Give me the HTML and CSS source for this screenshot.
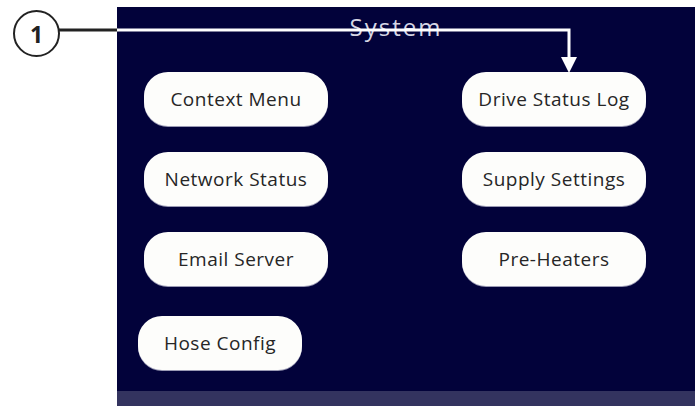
FILE: index.html
```html
<!DOCTYPE html>
<html lang="en">
<head>
  <meta charset="UTF-8" />
  <meta name="viewport" content="width=device-width, initial-scale=1.0"/>
  <title>System</title>
  <link rel="stylesheet" href="styles.css">
</head>
<body>
  <div class="page">
    <div class="screen">
      <h1 class="screen-title">System</h1>
      <div class="menu-grid">
        <button class="menu-btn">Context Menu</button>
        <button class="menu-btn">Drive Status Log</button>
        <button class="menu-btn">Network Status</button>
        <button class="menu-btn">Supply Settings</button>
        <button class="menu-btn">Email Server</button>
        <button class="menu-btn">Pre-Heaters</button>
        <button class="menu-btn menu-btn-short">Hose Config</button>
      </div>
      <div class="screen-footer"></div>
    </div>

    <!-- callout 1 pointing at Drive Status Log -->
    <div class="callout">
      <span class="callout-num">1</span>
      <svg class="callout-lines" width="695" height="80" viewBox="0 0 695 80">
        <line x1="59" y1="30" x2="118" y2="30" stroke="#222" stroke-width="3"/>
        <polyline points="117,30 569,30 569,58" fill="none" stroke="#fff" stroke-width="3"/>
        <polygon points="561,57 577,57 569,73" fill="#fff"/>
      </svg>
    </div>
  </div>
</body>
</html>
```

FILE: styles.css
```css
body {
  margin: 0;
  background-color: #fff;
  font-family: 'Open Sans', sans-serif;
}

.page {
  position: relative;
  width: 695px;
  height: 406px;
  overflow: hidden;
}

.screen {
  margin: 7px 0 0 117px;
  height: 399px;
  background-color: #02023a;
  display: flex;
  flex-direction: column;
}

.screen-title {
  margin: 0;
  padding: 7px 20px 0 0;
  height: 58px;
  text-align: center;
  font-size: 24px;
  font-weight: 400;
  line-height: 26px;
  color: #d6d6e4;
  letter-spacing: 2px;
}

.menu-grid {
  display: grid;
  grid-template-columns: 184px 184px;
  column-gap: 134px;
  row-gap: 26px;
  padding-left: 27px;
  flex: 1;
  align-content: start;
}

.menu-btn {
  height: 54px;
  border: none;
  border-radius: 24px;
  background-color: #fdfdfb;
  box-shadow: 0 1px 0 #9a9ab4;
  font-family: 'Open Sans', sans-serif;
  font-size: 19px;
  font-weight: 500;
  letter-spacing: 0.5px;
  color: #262626;
  padding: 0;
}

.menu-btn-short {
  width: 164px;
  margin: 4px 0 0 -6px;
}

.screen-footer {
  height: 15px;
  background-color: #33335f;
}

.callout {
  position: absolute;
  top: 0;
  left: 0;
}

.callout-num {
  position: absolute;
  left: 13px;
  top: 10px;
  width: 43px;
  height: 43px;
  border: 2px solid #222;
  border-radius: 50%;
  background: #fff;
  display: flex;
  align-items: center;
  justify-content: center;
  font-family: 'Open Sans', sans-serif;
  font-weight: 700;
  font-size: 23px;
  color: #222;
}

.callout-lines {
  position: absolute;
  top: 0;
  left: 0;
}
```
